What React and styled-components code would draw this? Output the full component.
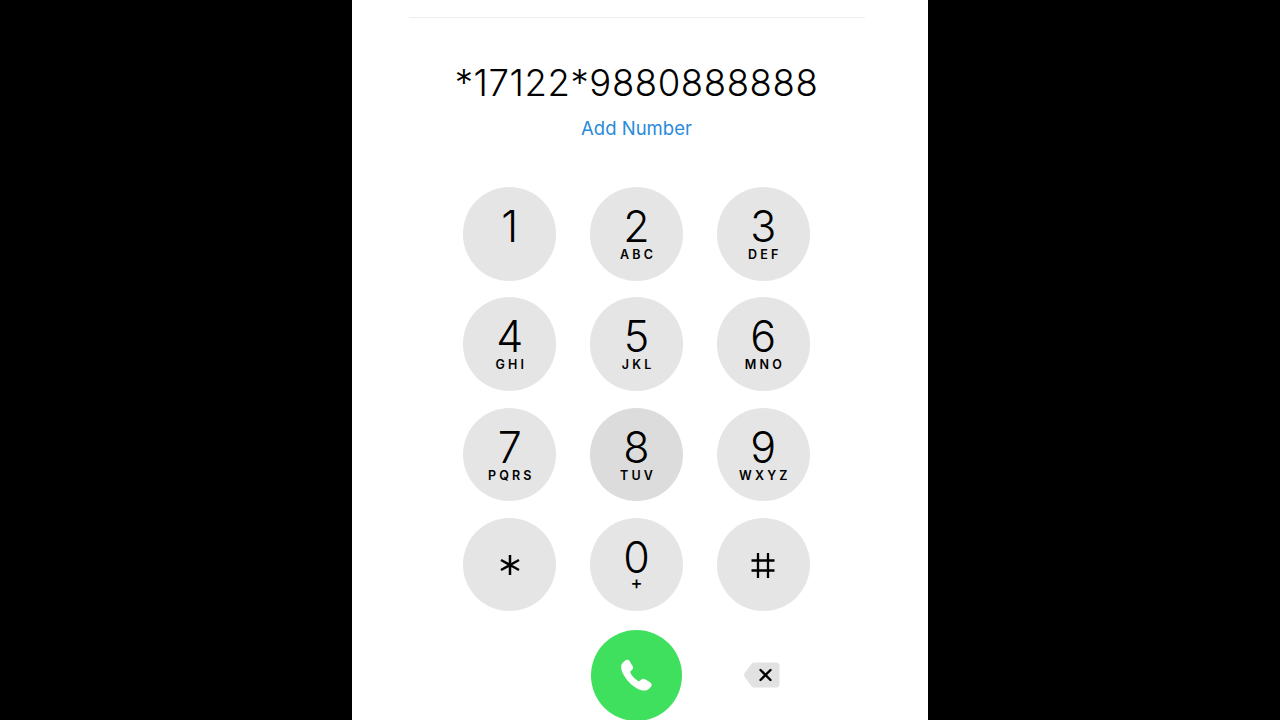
import React from 'react'
import styled, { createGlobalStyle } from 'styled-components'

const Global = createGlobalStyle`
  html, body {
    margin: 0;
    height: 100%;
    background: #000;
    overflow: hidden;
  }
  body {
    font-family: "Inter", "Liberation Sans", sans-serif;
  }
`

const keys = [
  { digit: '1', letters: '' },
  { digit: '2', letters: 'ABC' },
  { digit: '3', letters: 'DEF' },
  { digit: '4', letters: 'GHI' },
  { digit: '5', letters: 'JKL' },
  { digit: '6', letters: 'MNO' },
  { digit: '7', letters: 'PQRS' },
  { digit: '8', letters: 'TUV', pressed: true },
  { digit: '9', letters: 'WXYZ' },
  { digit: '*', symbol: true },
  { digit: '0', letters: '+', plus: true },
  { digit: '#', symbol: true },
]

const App = () => {
  return (
    <Stage>
      <Global />
      <Phone>
        <Divider />
        <Dialed>*17122*9880888888</Dialed>
        <AddNumber>Add Number</AddNumber>
        <Keypad>
          {keys.map((k) => (
            <Key key={k.digit} $pressed={k.pressed}>
              {k.symbol ? (
                <Symbol>
                  {k.digit === '*' ? <StarIcon /> : <HashIcon />}
                </Symbol>
              ) : (
                <>
                  <Digit>{k.digit}</Digit>
                  {k.letters && <Letters $plus={k.plus}>{k.letters}</Letters>}
                </>
              )}
            </Key>
          ))}
        </Keypad>
        <BottomRow>
          <CallButton>
            <svg width="36" height="36" viewBox="0 0 36 36">
              <path
                d="M6.500 2.300c1.500-1 3.300-.6 4.200.9l2.900 4.700c.8 1.300.6 2.900-.5 3.900l-1.300 1.200c-.6.500-.7 1.200-.3 1.900 1.800 3.400 4.200 5.900 7.600 8 .7.400 1.400.3 1.900-.2l1.300-1.200c1.100-1 2.700-1.100 3.900-.3l5.100 3.300c1.500 1 1.800 2.900.7 4.300-1.400 1.800-3.500 3.600-6 3.800-4.400.3-10.500-2.700-15.400-7.800C5.400 19.200 1.900 13 2.100 8.500c.1-2.500 2.400-4.900 4.400-6.200z"
                fill="#fff"
              />
            </svg>
          </CallButton>
          <Backspace>
            <svg width="36" height="26" viewBox="0 0 36 26">
              <path d="M10 0.500h22a3.500 3.500 0 0 1 3.500 3.500v18a3.500 3.500 0 0 1-3.500 3.500H10a3 3 0 0 1-2.200-1L1 15.500a4 4 0 0 1 0-5l6.800-9a3 3 0 0 1 2.200-1z" fill="#e2e2e2" />
              <path d="M16.500 8l10 10M26.500 8l-10 10" stroke="#000" strokeWidth="2.400" strokeLinecap="round" />
            </svg>
          </Backspace>
        </BottomRow>
      </Phone>
    </Stage>
  )
}

const StarIcon = () => (
  <svg width="22" height="22" viewBox="0 0 22 22">
    <path d="M11 1v20M2 6l18 10M20 6L2 16" stroke="#000" strokeWidth="2.500" />
  </svg>
)

const HashIcon = () => (
  <svg width="24" height="27" viewBox="0 0 24 27">
    <path d="M7 1v25M17 1v25M0.500 8.500h23M0.500 18.500h23" stroke="#000" strokeWidth="2.300" />
  </svg>
)

export default App

const Stage = styled.div`
  display: flex;
  justify-content: center;
  height: 720px;
  background: #000;
  overflow: hidden;
`

const Phone = styled.main`
  width: 576px;
  height: 720px;
  box-sizing: border-box;
  padding-right: 7px;
  background: #fff;
  display: flex;
  flex-direction: column;
  align-items: center;
  overflow: hidden;
  & > * {
    flex: none;
  }
`

const Divider = styled.div`
  width: 456px;
  height: 1px;
  margin-top: 17px;
  background: #f0efed;
`

const Dialed = styled.div`
  margin-top: 43px;
  font-size: 36.500px;
  line-height: 44px;
  font-weight: 300;
  letter-spacing: 0.6px;
  color: #000;
  white-space: nowrap;
`

const AddNumber = styled.div`
  margin-top: 11px;
  font-size: 18.500px;
  line-height: 24px;
  font-weight: 400;
  color: #2a8adb;
`

const Keypad = styled.div`
  margin-top: 47px;
  display: grid;
  grid-template-columns: repeat(3, 93.5px);
  grid-auto-rows: 93.500px;
  column-gap: 33.300px;
  row-gap: 16.800px;
`

const Key = styled.div`
  border-radius: 50%;
  background: ${(p) => (p.$pressed ? '#dcdcdc' : '#e5e5e5')};
  display: flex;
  flex-direction: column;
  align-items: center;
  padding-top: 19px;
  box-sizing: border-box;
  color: #000;
`

const Digit = styled.span`
  font-size: 43px;
  line-height: 40px;
  font-weight: 300;
`

const Letters = styled.span`
  margin-top: ${(p) => (p.$plus ? '-1px' : '2px')};
  font-size: ${(p) => (p.$plus ? '18px' : '12.5px')};
  line-height: 14px;
  font-weight: ${(p) => (p.$plus ? '500' : '600')};
  letter-spacing: ${(p) => (p.$plus ? '0' : '3.2px')};
  margin-right: ${(p) => (p.$plus ? '0' : '-3.2px')};
`

const Symbol = styled.div`
  flex: 1;
  display: flex;
  align-items: center;
  justify-content: center;
  margin-top: -19px;
  padding-top: 1px;
`

const BottomRow = styled.div`
  margin-top: 19px;
  width: 347px;
  display: grid;
  grid-template-columns: 1fr 91px 1fr;
  align-items: start;
`

const CallButton = styled.div`
  grid-column: 2;
  width: 91px;
  height: 91px;
  border-radius: 50%;
  background: #40e05f;
  display: flex;
  align-items: center;
  justify-content: center;
`

const Backspace = styled.div`
  grid-column: 3;
  display: flex;
  justify-content: flex-end;
  margin-top: 32px;
  padding-right: 30px;
`
